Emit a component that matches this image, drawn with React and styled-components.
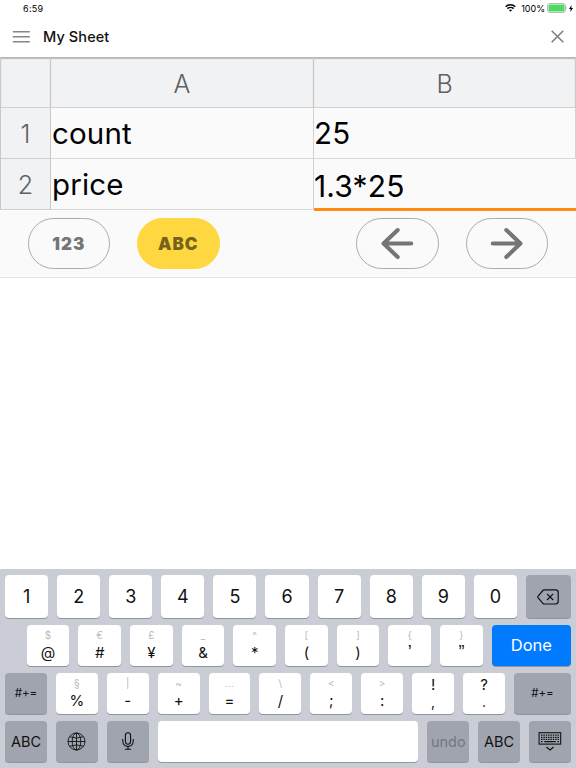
import React from "react";
import styled, { createGlobalStyle } from "styled-components";

const numberKeys = ["1", "2", "3", "4", "5", "6", "7", "8", "9", "0"];

const symbolKeys = [
  { hint: "$", label: "@" },
  { hint: "€", label: "#" },
  { hint: "£", label: "¥" },
  { hint: "_", label: "&" },
  { hint: "^", label: "*" },
  { hint: "[", label: "(" },
  { hint: "]", label: ")" },
  { hint: "{", label: "’", quote: true },
  { hint: "}", label: "”", quote: true },
];

const punctuationKeys = [
  { hint: "§", label: "%" },
  { hint: "|", label: "-" },
  { hint: "~", label: "+" },
  { hint: "…", label: "=" },
  { hint: "\\", label: "/" },
  { hint: "<", label: ";" },
  { hint: ">", label: ":" },
  { hint: "!", label: ",", strong: true },
  { hint: "?", label: ".", strong: true },
];

const WifiIcon = () => (
  <svg width="11" height="8" viewBox="0 0 11 8" fill="none" stroke="#000">
    <path d="M0.7 2.7C3.4 0.2 7.6 0.2 10.3 2.7" strokeWidth="1.5" />
    <path d="M2.4 4.6C4.1 3 6.9 3 8.6 4.6" strokeWidth="1.5" />
    <path d="M3.9 6.1C4.8 5.2 6.2 5.2 7.1 6.1L5.5 7.7Z" fill="#000" stroke="none" />
  </svg>
);

const BatteryIcon = () => (
  <svg width="20" height="10" viewBox="0 0 20 10">
    <rect x="0.5" y="0.5" width="18" height="9" rx="2.4" fill="#fff" stroke="#b9b9bb" />
    <rect x="1.5" y="1.5" width="16" height="7" rx="1.3" fill="#4cd964" />
    <path d="M19.2 3.6C20.1 4 20.1 6 19.2 6.4Z" fill="#b9b9bb" />
  </svg>
);

const BoltIcon = () => (
  <svg width="4" height="7" viewBox="0 0 4 7">
    <path d="M2.6 0L0 3.9H1.7L1.3 7L4 2.9H2.3Z" fill="#000" />
  </svg>
);

const MenuIcon = () => (
  <svg width="18" height="12" viewBox="0 0 18 12" stroke="#868686" strokeWidth="1.5">
    <path d="M0.8 0.8H17.8M0.8 5.8H17.8M0.8 10.8H17.8" />
  </svg>
);

const CloseIcon = () => (
  <svg width="13" height="13" viewBox="0 0 13 13" stroke="#7b7b7b" strokeWidth="1.5">
    <path d="M0.7 0.7L12.3 12.3M12.3 0.7L0.7 12.3" />
  </svg>
);

const ArrowIcon = ({ flip }) => (
  <Arrow $flip={flip} width="34" height="34" viewBox="0 0 34 34">
    <path d="M17.7 3L3.5 16.5L17.7 30M3.5 16.5H31.3" />
  </Arrow>
);

const BackspaceIcon = () => (
  <svg width="22" height="16" viewBox="0 0 22 16" fill="none" stroke="#111" strokeWidth="1.2">
    <path d="M7.3 0.8H18.4Q21.2 0.8 21.2 3.5V12.3Q21.2 15 18.4 15H7.3Q6.5 15 5.9 14.3L1 8.6Q0.6 7.9 1 7.3L5.9 1.5Q6.5 0.8 7.3 0.8Z" />
    <path d="M10 4.8L16.2 11M16.2 4.8L10 11" />
  </svg>
);

const GlobeIcon = () => (
  <svg width="19" height="19" viewBox="0 0 19 19" fill="none" stroke="#111" strokeWidth="0.9">
    <circle cx="9.5" cy="9.5" r="8.5" />
    <ellipse cx="9.5" cy="9.5" rx="4.3" ry="8.5" />
    <path d="M9.5 1V18M1 9.5H18M2.7 4.8Q9.5 7.4 16.3 4.8M2.7 14.2Q9.5 11.6 16.3 14.2" />
  </svg>
);

const MicIcon = () => (
  <svg width="12" height="18" viewBox="0 0 12 18" fill="none" stroke="#111" strokeWidth="1.1">
    <rect x="3.4" y="0.8" width="5.2" height="11.4" rx="2.6" />
    <path d="M0.8 7V9.3C0.8 16 11.2 16 11.2 9.3V7M6 14.4V17.2M3 17.2H9" />
  </svg>
);

const KeyboardIcon = () => (
  <svg width="24" height="19" viewBox="0 0 24 19" fill="none" stroke="#111">
    <rect x="1.1" y="0.7" width="21.6" height="11.4" strokeWidth="1.1" />
    <path
      d="M3 3.2H21M3 5.3H21M3 7.4H21"
      strokeWidth="1.3"
      strokeDasharray="1.5 0.85"
    />
    <path d="M3 9.6H4.6M6.3 9.6H17.8M19.4 9.6H21" strokeWidth="1.3" />
    <path d="M8.4 15L12 17.9L15.6 15" strokeWidth="1.2" />
  </svg>
);

const SymbolKey = ({ hint, label, strong, quote, width }) => (
  <Key $width={width}>
    <Stack>
      <Hint $strong={strong}>{hint}</Hint>
      <Symbol $strong={strong} $quote={quote}>
        {label}
      </Symbol>
    </Stack>
  </Key>
);

const App = () => {
  return (
    <Screen>
      <GlobalStyle />
      <StatusBar>
        <Clock>6:59</Clock>
        <StatusIcons>
          <WifiIcon />
          <Percent>100%</Percent>
          <BatteryIcon />
          <BoltIcon />
        </StatusIcons>
      </StatusBar>
      <Header>
        <MenuIcon />
        <Title>My Sheet</Title>
        <CloseIcon />
      </Header>
      <Sheet>
        <HeadCell />
        <HeadCell>A</HeadCell>
        <HeadCell>B</HeadCell>
        <HeadCell>1</HeadCell>
        <Cell $inset="1px">count</Cell>
        <Cell>25</Cell>
        <HeadCell>2</HeadCell>
        <Cell $inset="1px">price</Cell>
        <Cell $active>1.3*25</Cell>
      </Sheet>
      <Toolbar>
        <Group>
          <Pill>123</Pill>
          <Pill $active>ABC</Pill>
        </Group>
        <Group>
          <Pill>
            <ArrowIcon />
          </Pill>
          <Pill>
            <ArrowIcon flip />
          </Pill>
        </Group>
      </Toolbar>
      <Keyboard>
        <KeyRow $height="43px">
          {numberKeys.map((key) => (
            <Key key={key} $width="43.1px">
              {key}
            </Key>
          ))}
          <Key $dark>
            <BackspaceIcon />
          </Key>
        </KeyRow>
        <KeyRow $height="40.5px" $indent="21.6px">
          {symbolKeys.map((key) => (
            <SymbolKey key={key.label} width="42.7px" {...key} />
          ))}
          <Key $primary $size="16.5px">
            Done
          </Key>
        </KeyRow>
        <KeyRow $height="41px">
          <Key $dark $width="41.9px" $size="11.5px">
            #+=
          </Key>
          {punctuationKeys.map((key) => (
            <SymbolKey key={key.label} width="41.9px" {...key} />
          ))}
          <Key $dark $size="11.5px">
            #+=
          </Key>
        </KeyRow>
        <KeyRow $height="41px">
          <Key $dark $width="41.9px" $size="14.5px">
            ABC
          </Key>
          <Key $dark $width="41.9px">
            <GlobeIcon />
          </Key>
          <Key $dark $width="41.9px">
            <MicIcon />
          </Key>
          <Key />
          <Key $dark $muted $width="41.9px" $size="14.5px">
            undo
          </Key>
          <Key $dark $width="41.9px" $size="14.5px">
            ABC
          </Key>
          <Key $dark $width="41.9px">
            <KeyboardIcon />
          </Key>
        </KeyRow>
      </Keyboard>
    </Screen>
  );
};

const GlobalStyle = createGlobalStyle`
  * {
    box-sizing: border-box;
  }
  body {
    margin: 0;
    background: #fff;
    font-family: Inter, "Liberation Sans", sans-serif;
  }
  svg {
    display: block;
    flex: none;
  }
`;
const Screen = styled.div`
  display: flex;
  flex-direction: column;
  width: 576px;
  height: 768px;
  overflow: hidden;
`;
const StatusBar = styled.div`
  display: flex;
  justify-content: space-between;
  align-items: center;
  height: 16px;
  padding: 0 3px 0 23px;
  font-size: 9px;
  color: #000;
`;
const Clock = styled.span`
  letter-spacing: 0.3px;
`;
const StatusIcons = styled.div`
  display: flex;
  align-items: center;
  gap: 2px;
`;
const Percent = styled.span`
  margin-left: 3px;
`;
const Header = styled.header`
  display: flex;
  align-items: center;
  height: 41px;
  padding: 0 12px 0 12px;
`;
const Title = styled.h1`
  flex: 1;
  margin: 0 0 0 13px;
  font-size: 14.5px;
  font-weight: 500;
  letter-spacing: 0.1px;
  color: #111;
`;
const Sheet = styled.div`
  display: grid;
  grid-template-columns: 50px 263px 262px;
  grid-template-rows: 51px 51px 51px;
  height: 153px;
  border-left: 1px solid #c8c8c8;
  background: #fafafa;
`;
const HeadCell = styled.div`
  display: flex;
  align-items: center;
  justify-content: center;
  border-right: 1px solid #c8c8c8;
  border-bottom: 1px solid #cfcfcf;
  background: #f1f2f4;
  font-size: 25px;
  font-weight: 300;
  color: #606060;
  padding-top: 1px;
  &:nth-child(-n + 3) {
    padding-top: 3px;
    box-shadow: inset 0 2px 1px #b9b9b9;
  }
`;
const Cell = styled.div`
  display: flex;
  align-items: center;
  padding-top: ${(props) => (props.$active ? "5px" : "0")};
  padding-left: ${(props) => props.$inset || "0"};
  border-right: ${(props) => (props.$active ? "none" : "1px solid #d2d2d2")};
  border-bottom: ${(props) =>
    props.$active ? "2px solid #ff8a0c" : "1px solid #d8d8d8"};
  background: #fafafa;
  font-size: ${(props) => (props.$active ? "30px" : "29.5px")};
  letter-spacing: 0.15px;
  color: #000;
  box-shadow: ${(props) => (props.$active ? "0 1px 0 #ff8f1a" : "none")};
`;
const Toolbar = styled.div`
  display: flex;
  justify-content: space-between;
  height: 68px;
  padding: 8px 27.5px 0;
  border-bottom: 1px solid #e6e6e6;
  /* leaves the underline of the active cell visible */
  background: linear-gradient(#fafafa, #fafafa) 0 1px no-repeat;
`;
const Group = styled.div`
  display: flex;
  gap: 27px;
`;
const Pill = styled.button`
  display: flex;
  align-items: center;
  justify-content: center;
  width: 82.5px;
  height: 51px;
  padding: 0;
  border: 1px solid ${(props) => (props.$active ? "#ffd740" : "#ababab")};
  border-radius: 26px;
  background: ${(props) => (props.$active ? "#ffd740" : "transparent")};
  color: ${(props) => (props.$active ? "#75621c" : "#757575")};
  font-family: Inter, sans-serif;
  font-size: 17px;
  font-weight: 900;
  letter-spacing: 1px;
  &:last-child {
    margin-right: 0.5px;
  }
`;
const Arrow = styled.svg`
  fill: none;
  stroke: #757575;
  stroke-width: 4;
  stroke-linecap: round;
  stroke-linejoin: round;
  transform: ${(props) => (props.$flip ? "scaleX(-1)" : "none")};
`;
const Keyboard = styled.div`
  display: flex;
  flex-direction: column;
  gap: 7px;
  height: 199px;
  margin-top: auto;
  padding: 6px 5px 0;
  background: #cacdd5;
`;
const KeyRow = styled.div`
  display: flex;
  gap: 9px;
  height: ${(props) => props.$height};
  padding-left: ${(props) => props.$indent || "0"};
`;
const Key = styled.div`
  display: flex;
  align-items: center;
  justify-content: center;
  flex: ${(props) => (props.$width ? `0 0 ${props.$width}` : "1")};
  height: 100%;
  border-radius: 4px;
  box-shadow: 0 1px 0 #93959b;
  background: ${(props) =>
    props.$primary ? "#007aff" : props.$dark ? "#a0a4af" : "#fff"};
  color: ${(props) =>
    props.$primary ? "#fff" : props.$muted ? "#74777f" : "#111"};
  font-size: ${(props) => props.$size || "18px"};
`;
const Stack = styled.div`
  display: flex;
  flex-direction: column;
  align-items: center;
`;
const Hint = styled.span`
  height: ${(props) => (props.$strong ? "17px" : "15px")};
  line-height: ${(props) => (props.$strong ? "17px" : "15px")};
  font-size: ${(props) => (props.$strong ? "15px" : "10px")};
  color: ${(props) => (props.$strong ? "#111" : "#b9b9bb")};
`;
const Symbol = styled.span`
  height: ${(props) => (props.$strong ? "17px" : "19px")};
  line-height: ${(props) => (props.$strong ? "17px" : "19px")};
  font-family: ${(props) =>
    props.$quote ? '"Liberation Sans", sans-serif' : "inherit"};
  font-size: ${(props) =>
    props.$quote ? "18px" : props.$strong ? "14px" : "15px"};
  color: #111;
`;

export default App;
